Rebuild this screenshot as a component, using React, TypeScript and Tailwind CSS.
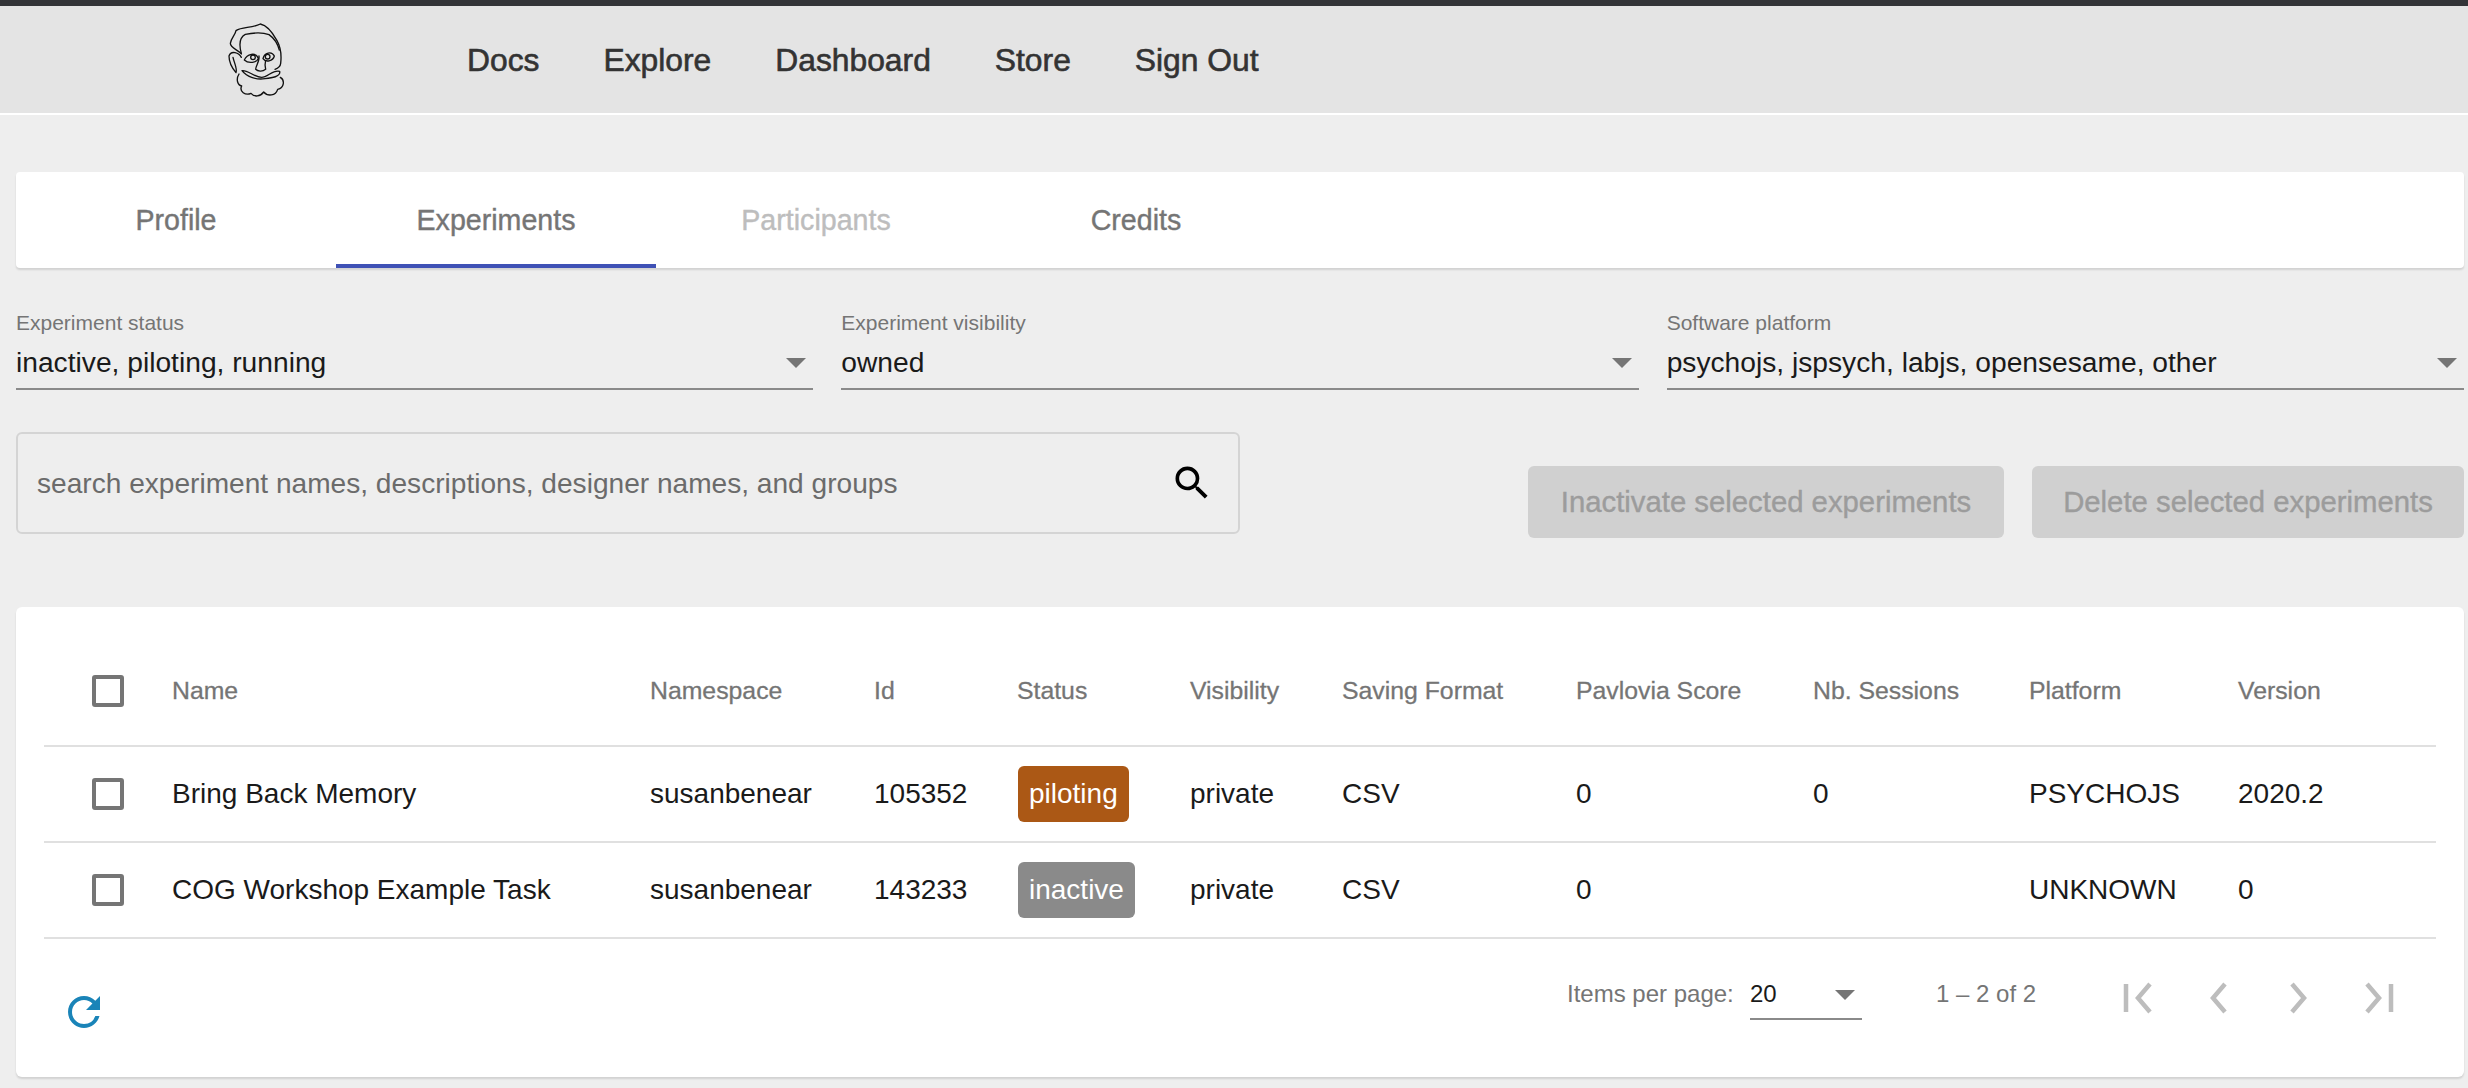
import React from "react";

function Logo() {
  return (
    <svg viewBox="140 60 180 240" className="w-[60px] h-[80px]" fill="none" stroke="#111" strokeWidth="4" strokeLinecap="round" strokeLinejoin="round">
      <path d="M183 162 C175 150 150 145 150 130 C152 115 165 105 167 92 C185 80 215 85 240 72 C262 76 278 100 290 122 C300 140 304 165 301 190 C300 200 292 205 284 208" />
      <path d="M183 160 C176 135 178 112 195 103 C220 98 250 98 266 104 C282 115 292 132 297 150" />
      <path d="M183 172 C176 158 152 150 146 168 C146 185 156 205 167 218 C172 208 162 190 158 172" />
      <path d="M192 180 C200 162 226 155 234 175 C230 188 205 192 192 180 Z" />
      <circle cx="218" cy="172" r="7" />
      <path d="M248 176 C252 158 274 152 282 168 C278 184 256 188 248 176 Z" />
      <circle cx="262" cy="170" r="7" />
      <path d="M236 168 C238 185 226 198 226 208 C232 214 246 216 256 208 C252 196 254 190 256 182" />
      <path d="M185 212 C200 208 222 232 244 232 C262 232 278 208 298 214 C302 230 274 234 254 236 C230 240 200 232 185 212 Z" />
      <path d="M176 222 C166 238 172 256 184 258 C176 274 195 288 212 280 C222 292 240 290 250 276 C262 290 286 288 292 268 C312 264 314 240 300 232" />
    </svg>
  );
}

const Caret = () => <div className="w-0 h-0 border-l-[10px] border-r-[10px] border-t-[10px] border-l-transparent border-r-transparent border-t-[#757575]" />;

function Filter({ label, value }: { label: string; value: string }) {
  return (
    <div className="w-[798px]">
      <div className="text-[21px] leading-[24px] text-[#757575]">{label}</div>
      <div className="flex items-center justify-between h-[55px] pt-[3px] border-b-2 border-[#8a8a8a] pr-[7px]">
        <span className="text-[28.2px] text-[#1a1a1a] -mt-[2px]">{value}</span>
        <Caret />
      </div>
    </div>
  );
}

const Check = () => <div className="w-[32px] h-[32px] rounded-[3px] border-[4px] border-[#757575]" />;

const cols = ["Name", "Namespace", "Id", "Status", "Visibility", "Saving Format", "Pavlovia Score", "Nb. Sessions", "Platform", "Version"];
const widths = ["w-[478px]", "w-[224px]", "w-[143px]", "w-[173px]", "w-[152px]", "w-[234px]", "w-[237px]", "w-[216px]", "w-[209px]", "w-[196px]"];

const rows = [
  ["Bring Back Memory", "susanbenear", "105352", "piloting", "private", "CSV", "0", "0", "PSYCHOJS", "2020.2"],
  ["COG Workshop Example Task", "susanbenear", "143233", "inactive", "private", "CSV", "0", "", "UNKNOWN", "0"],
];

export default function App() {
  return (
    <div className="w-[2468px] h-[1088px] overflow-hidden bg-[#eeeeee] font-['Liberation_Sans',sans-serif]">
      <div className="h-[6px] bg-[#333438]" />
      <header className="h-[107px] bg-[#e4e4e4] flex items-center">
        <div className="ml-[227px] w-[60px] shrink-0"><Logo /></div>
        <nav className="ml-[180px] mt-[3px] flex gap-[64px] text-[31.8px] font-medium text-[#333] [-webkit-text-stroke:0.6px_#333]">
          <span>Docs</span><span>Explore</span><span>Dashboard</span><span>Store</span><span>Sign Out</span>
        </nav>
      </header>
      <div className="h-[2px] bg-white" />
      <main className="pl-[16px] pr-[4px]">
        <div className="mt-[57px] h-[96px] bg-white rounded-[4px] shadow-[0_2px_2px_rgba(0,0,0,0.12)] flex">
          {[["Profile","text-[#757575]"],["Experiments","text-[#757575]"],["Participants","text-[#bdbdbd]"],["Credits","text-[#757575]"]].map(([t,c],i)=>(
            <div key={t} className={`w-[320px] flex items-center justify-center text-[28.6px] [-webkit-text-stroke:0.4px_currentColor] ${c} ${i===1?"border-b-[4px] border-[#3f51b5] pt-[4px]":""}`}>{t}</div>
          ))}
        </div>
        <div className="mt-[43px] flex gap-[28px]">
          <Filter label="Experiment status" value="inactive, piloting, running" />
          <Filter label="Experiment visibility" value="owned" />
          <Filter label="Software platform" value="psychojs, jspsych, labjs, opensesame, other" />
        </div>
        <div className="mt-[42px] flex items-start">
          <div className="w-[1224px] h-[102px] rounded-[6px] border-2 border-[#d4d4d4] flex items-center justify-between pl-[19px] pr-[24px]">
            <span className="text-[28.1px] text-[#6b6b6b] mt-[3px]">search experiment names, descriptions, designer names, and groups</span>
            <svg viewBox="0 0 24 24" className="w-[44px] h-[44px]" fill="#000"><path d="M15.5 14h-.79l-.28-.27A6.471 6.471 0 0 0 16 9.5 6.5 6.5 0 1 0 9.5 16c1.61 0 3.09-.59 4.23-1.57l.27.28v.79l5 4.99L20.49 19l-4.99-5zm-6 0C7.01 14 5 11.99 5 9.5S7.01 5 9.5 5 14 7.01 14 9.5 11.99 14 9.5 14z"/></svg>
          </div>
          <div className="ml-[288px] mt-[34px] flex gap-[28px]">
            <div className="w-[476px] h-[72px] rounded-[6px] bg-[#d0d0d0] flex items-center justify-center text-[29.3px] text-[#9c9c9c] [-webkit-text-stroke:0.4px_currentColor]">Inactivate selected experiments</div>
            <div className="w-[432px] h-[72px] rounded-[6px] bg-[#d0d0d0] flex items-center justify-center text-[29.3px] text-[#9c9c9c] [-webkit-text-stroke:0.4px_currentColor]">Delete selected experiments</div>
          </div>
        </div>
        <section className="mt-[69px] h-[470px] bg-white rounded-[6px] shadow-[0_2px_2px_rgba(0,0,0,0.12)] px-[28px]">
          <div className="flex items-center h-[140px] border-b-2 border-[#e0e0e0] pt-[29px]">
            <div className="w-[128px] pl-[48px]"><Check /></div>
            {cols.map((c,i)=>(<div key={c} className={`${widths[i]} shrink-0 text-[24.8px] text-[#757575] [-webkit-text-stroke:0.3px_currentColor]`}>{c}</div>))}
          </div>
          {rows.map((r)=>(
            <div key={r[0]} className="flex items-center h-[96px] border-b-2 border-[#e0e0e0]">
              <div className="w-[128px] pl-[48px]"><Check /></div>
              {r.map((v,i)=>(
                <div key={i} className={`${widths[i]} shrink-0 text-[28px] text-[#1a1a1a]`}>
                  {i===3 ? (
                    <span className={`inline-flex items-center ml-[1px] h-[56px] px-[11px] rounded-[6px] text-white ${v==="piloting"?"bg-[#ab5815]":"bg-[#8a8a8a]"}`}>{v}</span>
                  ) : v}
                </div>
              ))}
            </div>
          ))}
          <div className="flex items-start h-[134px]">
            <svg viewBox="0 0 24 24" className="w-[48px] h-[48px] ml-[16px] mt-[49px] shrink-0" fill="#1a84b8"><path d="M17.65 6.35A7.958 7.958 0 0 0 12 4c-4.42 0-7.99 3.58-7.99 8s3.57 8 7.99 8c3.73 0 6.84-2.55 7.73-6h-2.08A5.99 5.99 0 0 1 12 18c-3.31 0-6-2.69-6-6s2.69-6 6-6c1.66 0 3.14.69 4.22 1.78L13 11h7V4l-2.35 2.35z"/></svg>
            <div className="ml-[1459px] mt-[37px] flex items-center text-[24px] text-[#757575]">
              <span className="w-[183px] shrink-0 -mt-[8px]">Items per page:</span>
              <div className="w-[112px] h-[44px] border-b-2 border-[#8a8a8a] flex items-start justify-between pr-[7px] shrink-0 text-[#1a1a1a]">
                <span>20</span><div className="mt-[14px]"><Caret /></div>
              </div>
              <span className="ml-[74px] w-[184px] shrink-0 -mt-[8px]">1 – 2 of 2</span>
              <div className="flex gap-[39px] text-[#bdbdbd]">
                <svg viewBox="0 0 40 40" className="w-[40px] h-[40px]" fill="none" stroke="currentColor" strokeWidth="4.5"><path d="M6 6v28M30 6 18 20l12 14"/></svg>
                <svg viewBox="0 0 40 40" className="w-[40px] h-[40px]" fill="none" stroke="currentColor" strokeWidth="4.5"><path d="M26 6 14 20l12 14"/></svg>
                <svg viewBox="0 0 40 40" className="w-[40px] h-[40px]" fill="none" stroke="currentColor" strokeWidth="4.5"><path d="M14 6l12 14-12 14"/></svg>
                <svg viewBox="0 0 40 40" className="w-[40px] h-[40px]" fill="none" stroke="currentColor" strokeWidth="4.5"><path d="M34 6v28M10 6l12 14-12 14"/></svg>
              </div>
            </div>
          </div>
        </section>
      </main>
    </div>
  );
}
